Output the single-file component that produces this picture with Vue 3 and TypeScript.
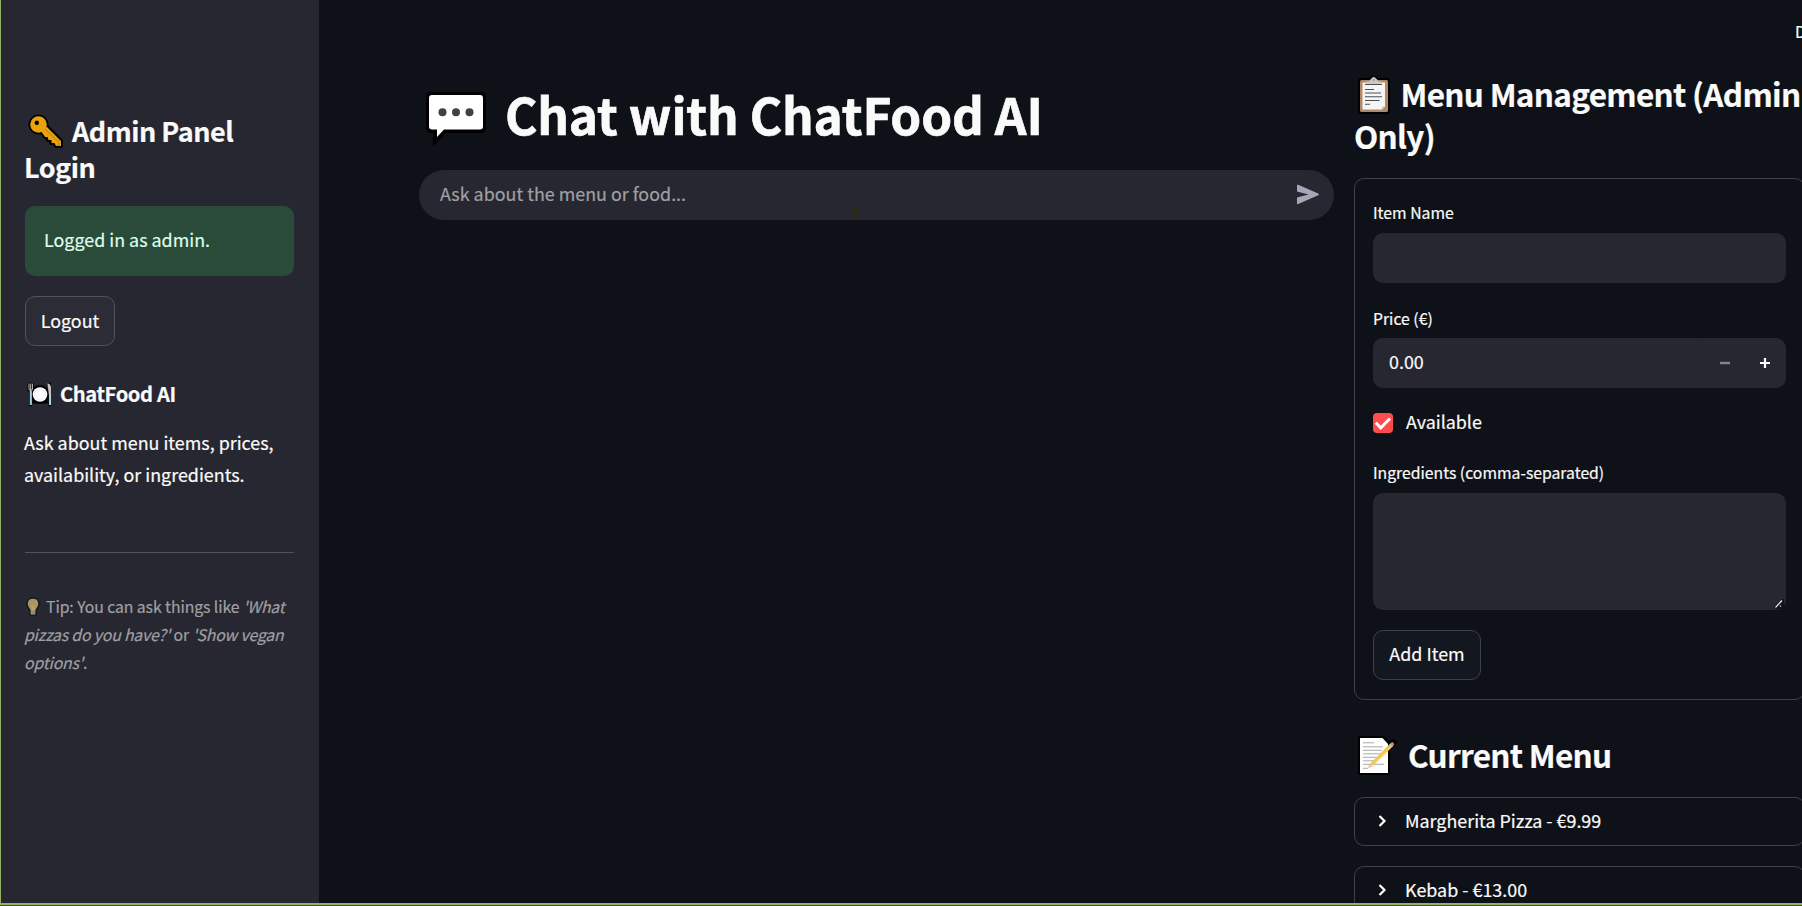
<script setup lang="ts">
import { ref } from 'vue'

interface MenuItem {
  name: string
  price: number
}

const question = ref('')
const itemName = ref('')
const price = ref('0.00')
const available = ref(true)
const ingredients = ref('')

const menu: MenuItem[] = [
  { name: 'Margherita Pizza', price: 9.99 },
  { name: 'Kebab', price: 13 },
]
</script>

<template>
  <div class="app">
    <div class="window">
      <aside class="sidebar">
        <h2 class="side-title"><svg class="key" viewBox="0 0 35 35"><g stroke="#000" stroke-width="4" stroke-linejoin="round" fill="#000"><circle cx="10.500" cy="10.500" r="8" /><path d="M13 17l3-3 3-1 14 14v5h-5l-2-3h-3v-3h-3l-1-3h-2z" /></g><g fill="#e8a30c"><circle cx="10.500" cy="10.500" r="8.300" /><path d="M13 17l3-3 3-1 14 14v5h-5l-1.500-3h-3v-3h-3l-1-3h-2.500z" /></g><path d="M17 15l14 13.500v3h-2.500" fill="none" stroke="#c47f0c" /><circle cx="8.800" cy="8.800" r="2.200" fill="#000" /></svg>Admin Panel Login</h2>
        <div class="success">Logged in as admin.</div>
        <button class="btn logout">Logout</button>
        <h6 class="brand"><svg class="plate" viewBox="0 0 26 25"><g stroke="#000" stroke-width="3" stroke-linejoin="round" stroke-linecap="round" fill="none"><circle cx="13" cy="12.500" r="8" fill="#000" /><path d="M3.500 2v21M22.500 2v21M2 2v6M5.500 2v6M6 20h14" /></g><circle cx="13" cy="12.500" r="7.300" fill="#fdfdff" /><circle cx="13" cy="12.500" r="5.300" fill="none" stroke="#e9e9ef" stroke-width=".8" /><path d="M2 1.500v5q0 2 1.700 2t1.800-2v-5M3.700 1.500v8" fill="none" stroke="#b5aaa8" stroke-width="1.100" /><path d="M20.500 1.500q3.500 0 3.500 5v6h-2.200z" fill="#c6c0be" /><path d="M3.800 9v14M23 12v11" stroke="#a9d2e6" stroke-width="2.100" /></svg>ChatFood AI</h6>
        <p class="about">Ask about menu items, prices, availability, or ingredients.</p>
        <hr class="rule" />
        <p class="tip"><svg class="bulb" viewBox="0 0 14 20"><path d="M7 1C3 1 1 4 1 7c0 3 2.500 4.500 3 7v4h6v-4c.5-2.500 3-4 3-7 0-3-2-6-6-6z" fill="#ab9560" stroke="#17171b" stroke-width="1.500" /><path d="M4.800 14h4.400v3.500H4.800z" fill="#8b8c8e" /><path d="M5 8.500l1.500 1v4M9 8.500l-1.500 1v4" fill="none" stroke="#c0a76b" stroke-width=".7" /></svg>Tip: You can ask things like <em>'What pizzas do you have?'</em> or <em>'Show vegan options'</em>.</p>
      </aside>

      <main class="main">
        <header class="toolbar"><span class="deploy">Deploy</span></header>
        <div class="columns">
          <section class="chat">
            <h1 class="title"><svg class="bubble" viewBox="0 0 62 56"><path d="M6 1h50q5 0 5 5v31q0 5-5 5H21L8 55.500V42H6q-5 0-5-5V6q0-5 5-5z" fill="#000" /><path d="M7 4h48q3 0 3 3v28.500q0 3-3 3H19L12 46v-7.500H7q-3 0-3-3V7q0-3 3-3z" fill="#fff" /><g fill="#403f41"><circle cx="17.500" cy="21.300" r="4" /><circle cx="31" cy="21.300" r="4" /><circle cx="44.500" cy="21.300" r="4" /></g></svg>Chat with ChatFood AI</h1>
            <div class="ask">
              <input v-model="question" class="ask-input" placeholder="Ask about the menu or food..." />
              <svg class="send" viewBox="0 0 24 22"><path d="M1 1.300Q1 .3 2.200.8l20 8.700q1.800.8 0 1.700l-20 8.900q-1.200.4-1.200-.7v-6l11.500-3L1 7.500z" fill="#a3a8b8" /></svg>
              <i class="caret"></i>
            </div>
          </section>

          <section class="admin">
            <h2 class="heading"><svg class="clip" viewBox="0 0 32 38"><rect x="0" y="2" width="32" height="36" rx="2" fill="#000" /><circle cx="15.700" cy="4.500" r="4.500" fill="#000" /><rect x="2" y="4" width="28" height="32" rx="1.500" fill="#b08a66" /><path d="M4.500 6.500h22.500v24l-3 3H4.500z" fill="#f5f5f5" /><path d="M8 5.500h3.500q1-3 2-3 .5-1.500 2.200-1.500t2.200 1.500q1.500.3 2 3h3.500v2.500H8z" fill="#c9c9c7" /><circle cx="15.700" cy="4" r="1" fill="#b08a66" /><path d="M7 8.500h17M7 13.500h9M7 17h16M7 20.800h17M7 24.500h14.500M7 28.300h5" stroke="#4b4f55" stroke-width="1.100" /><path d="M24 33.500v-3h3z" fill="#c8c4c2" /></svg>Menu Management (Admin Only)</h2>
            <form class="form" @submit.prevent>
              <label class="label">Item Name</label>
              <input v-model="itemName" class="field" />
              <label class="label price-label">Price (€)</label>
              <div class="number">
                <input v-model="price" class="field number-input" />
                <button type="button" class="step minus"><svg viewBox="0 0 10 10"><path d="M0 5h10" stroke="#83848c" stroke-width="2.400" /></svg></button>
                <button type="button" class="step"><svg viewBox="0 0 10 10"><path d="M0 5h10M5 0v10" stroke="#fff" stroke-width="2.200" /></svg></button>
              </div>
              <label class="check">
                <span class="box"><svg v-if="available" viewBox="0 0 20 20"><path d="M2.800 9.800l5 5L17 5.500" fill="none" stroke="#fff" stroke-width="3" /></svg></span><span class="check-text">Available</span>
              </label>
              <label class="label ingredients-label">Ingredients (comma-separated)</label>
              <div class="area-wrap">
                <textarea v-model="ingredients" class="field area"></textarea>
                <svg class="grip" viewBox="0 0 10 10"><path d="M0 8L8 0h2v10H2z" fill="#111217" /><path d="M1.500 8.500l6.500-7M6 7.500l.8-.8" stroke="#e6e6e6" stroke-width="1.300" /></svg>
              </div>
              <button class="btn add">Add Item</button>
            </form>

            <h2 class="heading current"><svg class="memo" viewBox="0 0 39 39"><path d="M0 0h26l5 5 4-2q4 1 4 4l-7 8v24H0z" fill="#000" /><path d="M2 2h22.500l5.500 6v29H2z" fill="#fdfdfd" /><path d="M5 6.800h11M5 10.800h20M5 14.300h19M5 17.800h20M5 21.300h17M5 24.800h14M5 28.300h21M5 32.300h5" stroke="#aaabad" stroke-width="1" /><path d="M11.500 28.500L31 8.700l2.800 2.800L14 30.500z" fill="#f4c341" /><path d="M13 30L33 10.500" stroke="#ffdc72" stroke-width="1" /><path d="M31 8.700l1.500-1.500 2.800 2.800-1.500 1.500z" fill="#c8c8cb" /><path d="M32.500 7.200q1.700-1.700 3-.4t-.2 3.200z" fill="#d9867f" /><path d="M11.500 28.500l2.500 2-4 1.700z" fill="#e2c1a1" /></svg>Current Menu</h2>
            <div class="menu">
              <div v-for="item in menu" :key="item.name" class="expander">
                <svg class="chev" viewBox="0 0 9 12"><path d="M1.500 1l5 5-5 5" fill="none" stroke="#fafafa" stroke-width="2.200" /></svg>
                <span class="item-text">{{ item.name }} - €{{ item.price.toFixed(2) }}</span>
              </div>
            </div>
          </section>
        </div>
      </main>
    </div>
  </div>
</template>

<style>
body {
  background: #0e1117;
}
</style>

<style scoped>
* {
  box-sizing: border-box;
}
.app {
  height: 906px;
  width: 1802px;
  overflow: hidden;
  background: #39502a;
  color: #fafafa;
  font: 400 17.900px/32px "Noto Sans CJK SC", "Noto Sans", sans-serif;
  -webkit-text-stroke: 0.200px currentColor;
}
.window {
  display: flex;
  height: 905px;
  border-left: 1px solid #94b264;
  border-bottom: 2px solid #94b264;
  background: #0e1117;
  overflow: hidden;
}
h1, h2, h6, p {
  margin: 0;
}
svg {
  display: inline-block;
  flex: none;
}
input, textarea, button {
  font: inherit;
  color: inherit;
  border: 0;
  outline: 0;
  background: none;
  padding: 0;
  margin: 0;
}

/* sidebar */
.sidebar {
  flex: none;
  width: 318px;
  padding: 113px 25px 0 24px;
  background: #262730;
}
.side-title {
  margin-left: -1px;
  font-size: 27px;
  line-height: 36px;
  font-weight: 700;
  letter-spacing: -0.500px;
}
.key {
  width: 35px;
  height: 35px;
  margin: 0 9.500px 0 3.500px;
  vertical-align: -7px;
}
.success {
  height: 70px;
  margin-top: 21px;
  padding: 17px 19px;
  border-radius: 10px;
  background: #2a4a3a;
  color: #dffde9;
}
.btn {
  display: block;
  height: 50px;
  padding-bottom: 3px;
  border: 1px solid #3e4148;
  border-radius: 10px;
  background: #131720;
}
.logout {
  width: 90px;
  margin-top: 20px;
  border-color: #51525a;
  background: #2b2c36;
}
.brand {
  margin-top: 34px;
  font-size: 20.200px;
  line-height: 27px;
  font-weight: 700;
  letter-spacing: -0.400px;
}
.plate {
  width: 26px;
  height: 25px;
  margin: 0 7px 0 2px;
  vertical-align: -4.500px;
}
.about {
  margin: 19.200px -2px 0 -1px;
}
.rule {
  height: 1px;
  margin: 61.700px 0 0;
  border: 0;
  background: #51525a;
}
.tip {
  margin: 40.200px -2px 0 -1px;
  font-size: 15.800px;
  line-height: 28px;
  letter-spacing: -0.080px;
  color: #a0a0a4;
}
.tip em {
  letter-spacing: -0.170px;
}
.bulb {
  width: 14px;
  height: 20px;
  margin: 0 6px 0 2px;
  vertical-align: -3.500px;
}

/* main area */
.main {
  flex: 1;
  min-width: 0;
  overflow: hidden;
}
.toolbar {
  height: 60px;
  padding: 16px 0 0 1476px;
  font-size: 15.800px;
}
.deploy {
  display: block;
  white-space: nowrap;
}
.columns {
  display: flex;
  gap: 20px;
  padding-left: 100px;
}
.chat {
  flex: none;
  width: 915px;
  padding-top: 21.400px;
}
.title {
  font-size: 49.500px;
  line-height: 66px;
  font-weight: 700;
  letter-spacing: -0.140px;
  white-space: nowrap;
  -webkit-text-stroke: 0.700px currentColor;
}
.bubble {
  width: 62px;
  height: 56px;
  margin: 0 18px 0 6px;
  vertical-align: -11.400px;
}
.ask {
  position: relative;
  display: flex;
  align-items: center;
  height: 50px;
  margin-top: 22.600px;
  padding: 0 14px 0 21px;
  border-radius: 25px;
  background: #262730;
}
.ask-input {
  flex: 1;
  height: 50px;
  padding-bottom: 4px;
}
.ask-input::placeholder {
  color: #a0a0a4;
  opacity: 1;
}
.send {
  width: 24px;
  height: 22px;
}
.caret {
  position: absolute;
  left: 434px;
  bottom: 0;
  width: 4px;
  height: 14px;
  background: #2c2b12;
}
.admin {
  flex: none;
  width: 451px;
  padding-top: 12.300px;
}
.heading {
  font-size: 31.500px;
  line-height: 42px;
  font-weight: 700;
  letter-spacing: -0.690px;
}
.clip {
  width: 32px;
  height: 38px;
  margin: 0 10.500px 0 4px;
  vertical-align: -7px;
}
.memo {
  width: 39px;
  height: 39px;
  margin: 0 11px 0 4px;
  vertical-align: -7px;
}
.form {
  height: 522px;
  margin-top: 21.700px;
  padding: 20px 18px;
  border: 1px solid #3e4148;
  border-radius: 10px;
}
.label {
  display: block;
  height: 34px;
  font-size: 15.750px;
  line-height: 28px;
}
.field {
  display: block;
  width: 413px;
  height: 50px;
  border-radius: 10px;
  padding: 0 16px 4px;
  background: #262730;
}
.price-label {
  height: 33px;
  margin-top: 22px;
}
.number {
  display: flex;
  width: 413px;
  border-radius: 10px;
  background: #262730;
}
.number-input {
  width: 332px;
}
.step {
  display: flex;
  width: 40px;
  align-items: center;
  justify-content: center;
}
.step svg {
  width: 10px;
  height: 10px;
}
.check {
  display: flex;
  align-items: center;
  gap: 13px;
  height: 32px;
  margin-top: 19px;
}
.check-text, .item-text {
  padding-bottom: 3px;
}
.box {
  width: 20px;
  height: 20px;
  border-radius: 4px;
  background: #ff4b4b;
}
.box svg {
  display: block;
}
.ingredients-label {
  margin-top: 20px;
}
.area-wrap {
  position: relative;
  width: 413px;
}
.area {
  height: 117px;
  resize: none;
}
.grip {
  position: absolute;
  right: 2px;
  bottom: 1px;
  width: 10px;
  height: 10px;
}
.add {
  width: 108px;
  margin-top: 20px;
}
.current {
  margin-top: 33.300px;
}
.menu {
  display: flex;
  flex-direction: column;
  gap: 20px;
  margin-top: 21.700px;
}
.expander {
  display: flex;
  align-items: center;
  gap: 18px;
  height: 49px;
  padding: 0 23px;
  border: 1px solid #3e4148;
  border-radius: 10px;
}
.chev {
  width: 9px;
  height: 12px;
}
</style>
